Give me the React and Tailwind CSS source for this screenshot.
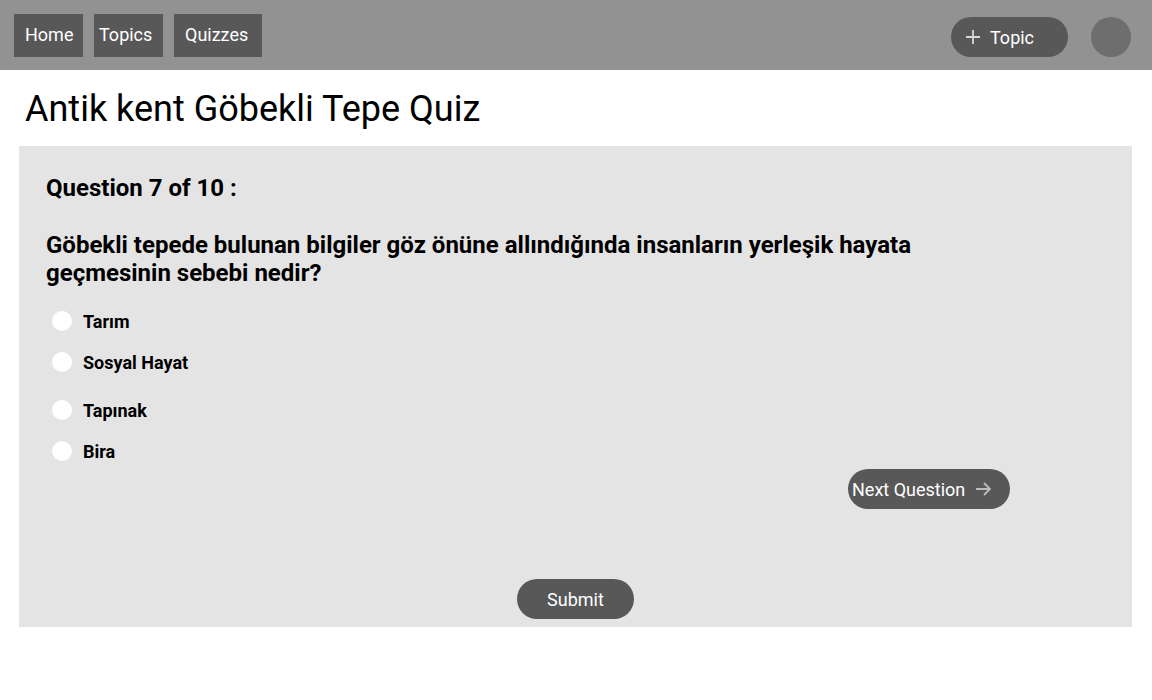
import React from "react";

export default function App() {
  const options = [
    { label: "Tarım", mt: "mt-0" },
    { label: "Sosyal Hayat", mt: "mt-[21px]" },
    { label: "Tapınak", mt: "mt-[28px]" },
    { label: "Bira", mt: "mt-[21px]" },
  ];
  return (
    <div className="w-[1152px] h-[700px] bg-white font-['Roboto',sans-serif] text-black">
      <header className="h-[70px] bg-[#929292] flex items-start justify-between pl-[14px] pr-[21px]">
        <nav className="flex items-center gap-[11px] mt-[14px]">
          <button className="h-[43px] w-[69px] pl-[11px] pb-[2px] text-left bg-[#585858] text-white text-[18px] leading-none">Home</button>
          <button className="h-[43px] w-[69px] pl-[5px] pb-[2px] text-left bg-[#585858] text-white text-[18px] leading-none">Topics</button>
          <button className="h-[43px] w-[88px] pl-[11px] pb-[2px] text-left bg-[#585858] text-white text-[18px] leading-none">Quizzes</button>
        </nav>
        <div className="flex items-center gap-[23px] mt-[17px]">
          <button className="h-[40px] w-[117px] rounded-full bg-[#585858] text-white text-[18px] flex items-center pl-[13px]">
            <svg width="18" height="18" viewBox="0 0 18 18" className="mr-[8px]">
              <path d="M9 2v14M2 9h14" stroke="#d8d8d8" strokeWidth="1.8" fill="none" />
            </svg>
            <span>Topic</span>
          </button>
          <div className="w-[40px] h-[40px] rounded-full bg-[#6e6e6e]" />
        </div>
      </header>
      <h1 className="text-[36px] leading-none pl-[25px] pt-[21px] pb-[19px] font-normal">Antik kent Göbekli Tepe Quiz</h1>
      <div className="mx-[19px] w-[1113px] h-[481px] bg-[#e4e4e4] relative">
        <div className="pl-[27px] pt-[28px]">
          <h2 className="text-[24px] font-bold leading-[28px]">Question 7 of 10 :</h2>
          <p className="mt-[29px] text-[24px] font-bold leading-[28px] w-[900px]">
            Göbekli tepede bulunan bilgiler göz önüne allındığında insanların yerleşik hayata geçmesinin sebebi nedir?
          </p>
          <div className="mt-[24px] flex flex-col">
            {options.map((o) => (
              <label key={o.label} className={`flex items-center h-[20px] ${o.mt}`}>
                <span className="ml-[6px] w-[20px] h-[20px] rounded-full bg-white" />
                <span className="ml-[11px] text-[18px] font-bold">{o.label}</span>
              </label>
            ))}
          </div>
        </div>
        <div className="absolute left-[829px] top-[323px]">
          <button className="h-[40px] w-[162px] rounded-full bg-[#585858] text-white text-[18px] flex items-center pl-[4px]">
            <span>Next Question</span>
            <svg width="20" height="20" viewBox="0 0 20 20" className="ml-[8px]">
              <path d="M3 10h14M11 4l6 6-6 6" stroke="#bdbdbd" strokeWidth="1.8" fill="none" />
            </svg>
          </button>
        </div>
        <div className="absolute left-0 right-0 top-[433px] flex justify-center">
          <button className="h-[40px] w-[117px] rounded-full bg-[#585858] text-white text-[18px]">Submit</button>
        </div>
      </div>
    </div>
  );
}
